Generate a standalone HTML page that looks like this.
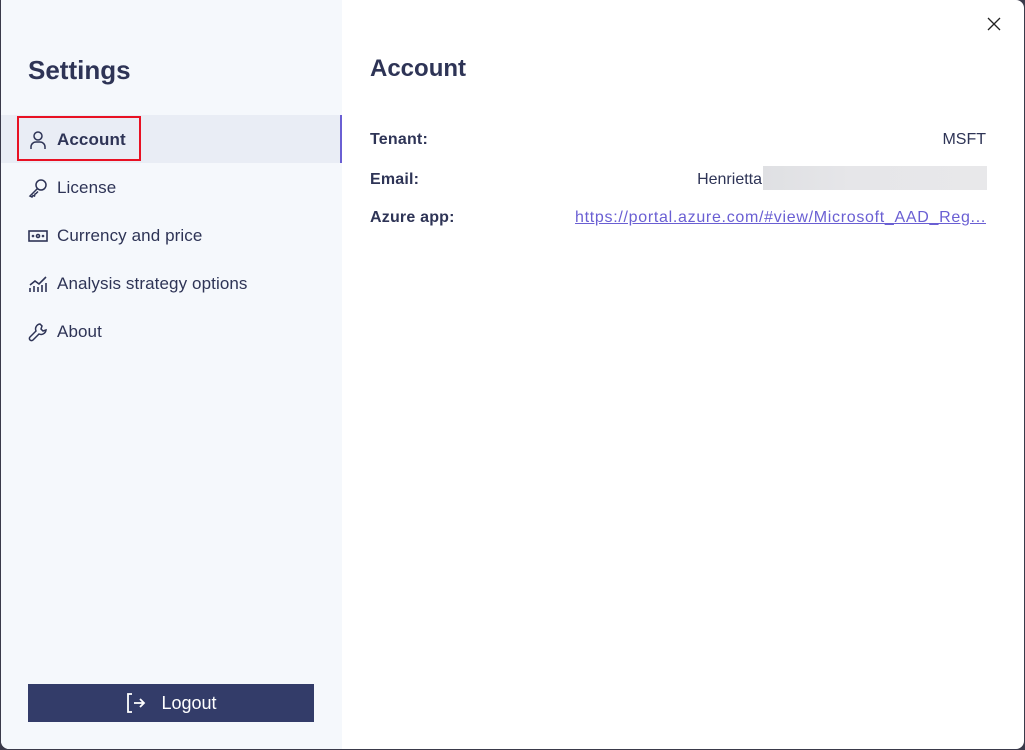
<!DOCTYPE html>
<html><head><meta charset="utf-8"><style>
*{margin:0;padding:0;box-sizing:border-box}
body{width:1025px;height:750px;background:#3a3a4a;font-family:"Liberation Sans",sans-serif;color:#2e3456;overflow:hidden}
.win{position:absolute;left:1px;top:0;width:1023px;height:749px;background:#fff;border-radius:0 8px 8px 8px;overflow:hidden}
.side{position:absolute;left:0;top:0;width:341px;height:749px;background:#f5f8fc}
h1{position:absolute;left:27px;top:55px;font-size:26px;font-weight:bold;color:#2e3456}
.item{position:absolute;left:0;width:341px;height:48px;font-size:17px;display:flex;align-items:center;padding-left:27px;padding-top:2px;color:#2e3456;letter-spacing:.1px}
.item svg{margin-right:9px}
.active{background:#e9edf5;border-right:2px solid #6a5fd3;font-weight:bold}
.hl{position:absolute;left:16px;top:116px;width:124px;height:45px;border:2px solid #e81123}
.btn{position:absolute;left:27px;top:684px;width:286px;height:38px;background:#333c69;color:#fff;font-size:18px;display:flex;align-items:center;justify-content:center}
h2{position:absolute;left:369px;top:55px;font-size:24px;font-weight:bold}
.lbl{position:absolute;left:369px;font-size:16px;font-weight:bold;letter-spacing:.2px}
.val{position:absolute;right:38px;font-size:16px;color:#2e3456}
a{color:#6a5fd3;text-decoration:underline;letter-spacing:.7px}
</style></head><body><div class="win">
<div class="side">
<h1>Settings</h1>
<div class="item active" style="top:115px"><svg width="20" height="20" viewBox="0 0 20 20" fill="none" stroke="#2e3456" stroke-width="1.5"><circle cx="10" cy="6" r="4"/><path d="M3 19v-2a5 5 0 0 1 5-5h4a5 5 0 0 1 5 5v2"/></svg>Account</div>
<div class="hl"></div>
<div class="item" style="top:163px"><svg width="20" height="20" viewBox="0 0 20 20" fill="none" stroke="#2e3456" stroke-width="1.5"><circle cx="13" cy="7" r="5"/><path d="M9.5 10.5L2 18l2 1 1-1.5 1.5.5L7 16l1-.5 2-2"/></svg>License</div>
<div class="item" style="top:211px"><svg width="20" height="20" viewBox="0 0 20 20" fill="none" stroke="#2e3456" stroke-width="1.6"><rect x="1" y="5" width="18" height="10"/><circle cx="10" cy="10" r="1.5"/><circle cx="5" cy="10" r=".5"/><circle cx="15" cy="10" r=".5"/></svg>Currency and price</div>
<div class="item" style="top:259px"><svg width="20" height="20" viewBox="0 0 20 20" fill="none" stroke="#2e3456" stroke-width="1.6"><path d="M2 18v-4M6 18v-6M10 18v-5M14 18v-7M18 18V9M2 11l5-4 4 3 7-7"/></svg>Analysis strategy options</div>
<div class="item" style="top:307px"><svg width="20" height="20" viewBox="0 0 20 20" fill="none" stroke="#2e3456" stroke-width="1.5"><path d="M12 2a5 5 0 0 0-4 7l-6 6a2 2 0 0 0 3 3l6-6a5 5 0 0 0 7-4l-3 1-2-2 1-3z"/></svg>About</div>
<div class="btn"><svg width="22" height="22" viewBox="0 0 22 22" fill="none" stroke="#fff" stroke-width="1.8" style="margin-right:14px"><path d="M7 2H3v18h4M9 11h10M15 7l4 4-4 4"/></svg>Logout</div>
</div>
<svg style="position:absolute;left:986px;top:17px" width="14" height="14" viewBox="0 0 14 14" stroke="#222" stroke-width="1.3"><path d="M1 1l12 12M13 1L1 13"/></svg>
<h2>Account</h2>
<div class="lbl" style="top:131px">Tenant:</div><div class="val" style="top:131px">MSFT</div>
<div class="lbl" style="top:171px">Email:</div><div class="val" style="top:171px;right:262px">Henrietta</div>
<div style="position:absolute;left:762px;top:166px;width:224px;height:24px;background:linear-gradient(90deg,#dfe0e3,#e6e6e9 40%,#e8e8ea)"></div>
<div class="lbl" style="top:209px">Azure app:</div><div class="val" style="top:209px"><a>https://portal.azure.com/#view/Microsoft_AAD_Reg...</a></div>
</div></body></html>
